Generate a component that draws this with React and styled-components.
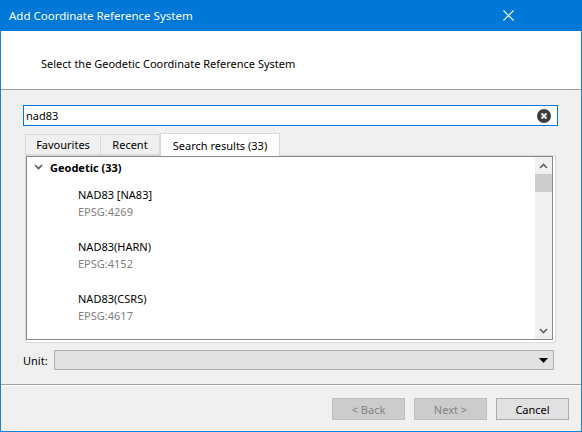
import React from 'react'
import styled, { createGlobalStyle } from 'styled-components'

const GlobalStyle = createGlobalStyle`
  html, body {
    margin: 0;
    padding: 0;
    background: #f0f0f0;
  }
  * {
    box-sizing: border-box;
  }
`;

const Window = styled.div`
  width: 582px;
  height: 432px;
  border: 1px solid #1883d7;
  border-top: 0;
  background: #f0f0f0;
  display: flex;
  flex-direction: column;
  font-family: 'Noto Sans', 'Open Sans', sans-serif;
  font-size: 11px;
  color: #000;
`;

const TitleBar = styled.div`
  height: 31px;
  margin: 0 -1px;
  background: #0078d7;
  color: #fff;
  display: flex;
  align-items: center;
  justify-content: space-between;
  padding: 0 0 1px 9px;
  font-size: 11.5px;
`;

const CloseBox = styled.div`
  width: 46px;
  height: 30px;
  display: flex;
  align-items: center;
  justify-content: center;
  margin-right: 51px;
`;

const Header = styled.div`
  height: 59px;
  background: #fff;
  border-bottom: 1px solid #a0a0a0;
  display: flex;
  align-items: center;
  padding: 6px 0 0 40px;
`;

const Body = styled.div`
  flex: 1;
  display: flex;
  flex-direction: column;
  padding: 15px 23px 0 22px;
`;

const SearchBox = styled.div`
  height: 21px;
  border: 1px solid #0078d7;
  background: #fff;
  display: flex;
  align-items: center;
  justify-content: space-between;
  padding: 0 6px 0 2px;
`;

const ClearIcon = styled.span`
  width: 14px;
  height: 14px;
  border-radius: 50%;
  background: #3d3d3d;
  display: flex;
  align-items: center;
  justify-content: center;
`;

const TabBar = styled.div`
  display: flex;
  align-items: flex-end;
  height: 23px;
  margin-top: 6px;
  padding-left: 2px;
`;

const Tab = styled.div`
  height: ${p => (p.$active ? '23px' : '21px')};
  width: ${p => p.$w}px;
  display: flex;
  align-items: center;
  justify-content: center;
  background: ${p => (p.$active ? '#fff' : '#f0f0f0')};
  border: 1px solid #d9d9d9;
  border-bottom: ${p => (p.$active ? '0' : '1px solid #d9d9d9')};
  margin-left: ${p => (p.$active || p.$first ? '0' : '-1px')};
  margin-bottom: ${p => (p.$active ? '-1px' : '0')};
  position: relative;
  z-index: ${p => (p.$active ? 1 : 0)};
`;

const Pane = styled.div`
  margin: 0 2px 0 2px;
  height: 188px;
  border: 1px solid #d9d9d9;
  background: #fff;
  padding: 0 2px 2px 0;
  display: flex;
`;

const Tree = styled.div`
  flex: 1;
  border: 1px solid #828790;
  display: flex;
`;

const TreeList = styled.div`
  flex: 1;
  background: #fff;
  display: flex;
  flex-direction: column;
`;

const GroupRow = styled.div`
  height: 20px;
  display: flex;
  align-items: center;
  font-weight: bold;
  padding-left: 7px;
  gap: 7px;
`;

const Item = styled.div`
  display: flex;
  flex-direction: column;
  padding: 9px 0 9px 51px;
  height: 52px;
  line-height: 17px;
`;

const Code = styled.span`
  color: #808080;
`;

const ScrollBar = styled.div`
  width: 17px;
  background: #f0f0f0;
  display: flex;
  flex-direction: column;
`;

const ScrollArrow = styled.div`
  height: 17px;
  display: flex;
  align-items: center;
  justify-content: center;
`;

const Thumb = styled.div`
  height: 18px;
  background: #cdcdcd;
`;

const Track = styled.div`
  flex: 1;
`;

const UnitRow = styled.div`
  display: flex;
  align-items: center;
  margin-top: 7px;
  margin-right: 4px;
  gap: 6px;
`;

const Combo = styled.div`
  flex: 1;
  height: 20px;
  background: #e1e1e1;
  border: 1px solid #adadad;
  display: flex;
  align-items: center;
  justify-content: flex-end;
  padding-right: 5px;
`;

const Footer = styled.div`
  border-top: 1px solid #a0a0a0;
  box-shadow: inset 0 1px 0 #fff;
  height: 47px;
  display: flex;
  justify-content: flex-end;
  align-items: flex-start;
  gap: 9px;
  padding: 13px 12px 0 0;
`;

const Button = styled.div`
  width: 73px;
  height: 22px;
  display: flex;
  align-items: center;
  justify-content: center;
  background: ${p => (p.$disabled ? '#cccccc' : '#e1e1e1')};
  border: 1px solid ${p => (p.$disabled ? '#bfbfbf' : '#adadad')};
  color: ${p => (p.$disabled ? '#838383' : '#000')};
`;

const Chevron = ({ up, color = '#606060' }) => (
  <svg width="9" height="6" viewBox="0 0 9 6">
    <path d={up ? 'M1 5 L4.5 1.5 L8 5' : 'M1 1 L4.5 4.5 L8 1'} fill="none" stroke={color} strokeWidth="1.6" />
  </svg>
)

const items = [
  { name: 'NAD83 [NA83]', code: 'EPSG:4269' },
  { name: 'NAD83(HARN)', code: 'EPSG:4152' },
  { name: 'NAD83(CSRS)', code: 'EPSG:4617' },
]

export default function App() {
  return (
    <>
      <GlobalStyle />
      <Window>
        <TitleBar>
          <span>Add Coordinate Reference System</span>
          <CloseBox>
            <svg width="11" height="11" viewBox="0 0 11 11">
              <path d="M0.5 0.5 L10.5 10.5 M10.5 0.5 L0.5 10.5" stroke="#fff" strokeWidth="1.1" />
            </svg>
          </CloseBox>
        </TitleBar>
        <Header>Select the Geodetic Coordinate Reference System</Header>
        <Body>
          <SearchBox>
            <span>nad83</span>
            <ClearIcon>
              <svg width="8" height="8" viewBox="0 0 8 8">
                <path d="M1.5 1.5 L6.5 6.5 M6.5 1.5 L1.5 6.5" stroke="#fff" strokeWidth="2" />
              </svg>
            </ClearIcon>
          </SearchBox>
          <TabBar>
            <Tab $first $w={76}>Favourites</Tab>
            <Tab $w={60}>Recent</Tab>
            <Tab $active $w={120}>Search results (33)</Tab>
          </TabBar>
          <Pane>
            <Tree>
              <TreeList>
                <GroupRow>
                  <Chevron color="#555" />
                  <span>Geodetic (33)</span>
                </GroupRow>
                {items.map(it => (
                  <Item key={it.code}>
                    <span>{it.name}</span>
                    <Code>{it.code}</Code>
                  </Item>
                ))}
              </TreeList>
              <ScrollBar>
                <ScrollArrow><Chevron up /></ScrollArrow>
                <Thumb />
                <Track />
                <ScrollArrow><Chevron /></ScrollArrow>
              </ScrollBar>
            </Tree>
          </Pane>
          <UnitRow>
            <span>Unit:</span>
            <Combo>
              <svg width="9" height="5" viewBox="0 0 9 5">
                <path d="M0 0 L9 0 L4.5 5 Z" fill="#000" />
              </svg>
            </Combo>
          </UnitRow>
        </Body>
        <Footer>
          <Button $disabled>&lt; Back</Button>
          <Button $disabled>Next &gt;</Button>
          <Button>Cancel</Button>
        </Footer>
      </Window>
    </>
  )
}
